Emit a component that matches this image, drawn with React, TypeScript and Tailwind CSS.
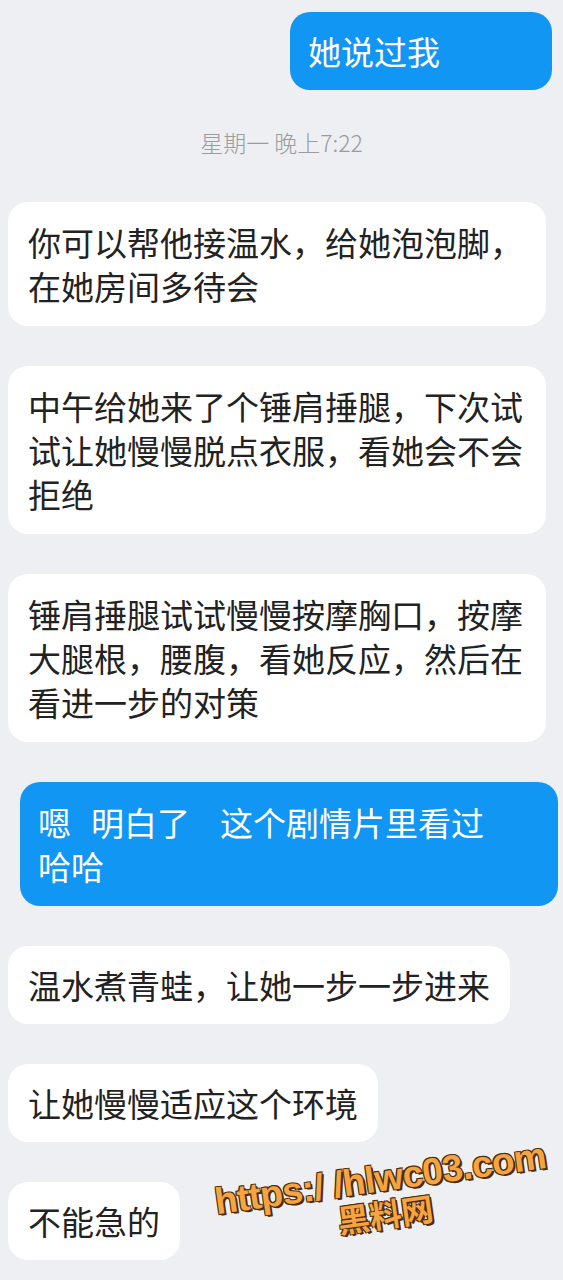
const messages: { id: number; from: "me" | "them"; text: string }[] = [
    { id: 1, from: "them", text: "你可以帮他接温水，给她泡泡脚，在她房间多待会" },
    { id: 2, from: "them", text: "中午给她来了个锤肩捶腿，下次试试让她慢慢脱点衣服，看她会不会拒绝" },
    { id: 3, from: "them", text: "锤肩捶腿试试慢慢按摩胸口，按摩大腿根，腰腹，看她反应，然后在看进一步的对策" },
];

const tail = ["温水煮青蛙，让她一步一步进来", "让她慢慢适应这个环境", "不能急的"];

function Bubble({ children, mine, className = "" }: { children: React.ReactNode; mine?: boolean; className?: string }) {
    return (
        <div
            className={`rounded-[20px] px-[20px] py-[18px] text-[33px] leading-[44px] ${mine ? "bg-[#1296f3] text-white" : "bg-white text-[#222222]"
                } ${className}`}
        >
            {children}
        </div>
    );
}

export default function App() {
    return (
        <div
            className="relative h-[1280px] w-[563px] overflow-hidden bg-[#eeeff3]"
            style={{ fontFamily: '"Noto Sans CJK SC", "Noto Sans", sans-serif' }}
        >
            <div className="flex flex-col pt-[12px]">
                {/* outgoing */}
                <Bubble mine className="mr-[11px] w-[262px] self-end !px-[18px] !py-[17px] bg-[#1a95ee]">
                    她说过我
                </Bubble>

                {/* timestamp */}
                <div className="mt-[38px] mb-[46px] text-center text-[23px] font-light leading-[28px] text-[#9b9b9d]">
                    星期一 晚上7:22
                </div>

                <div className="flex flex-col items-start gap-[40px] pl-[8px]">
                    {messages.map((m) => (
                        <Bubble key={m.id} className="w-[538px]">
                            {m.text}
                        </Bubble>
                    ))}

                    <Bubble mine className="ml-[12px] w-[538px] !pl-[18px] bg-[#0b9af8]">
                        嗯<span className="inline-block w-[20px]" />明白了<span className="inline-block w-[30px]" />这个剧情片里看过
                        <br />
                        哈哈
                    </Bubble>

                    {tail.map((t) => (
                        <Bubble key={t} className="!py-[17px]">{t}</Bubble>
                    ))}
                </div>
            </div>

            {/* watermark */}
            <div
                className="absolute left-[216px] top-[1160px] flex -rotate-[8deg] flex-col items-center text-[#f6a443] [text-shadow:2px_2px_0_#4b2d0a,-1px_-1px_0_#4b2d0a,1px_-1px_0_#4b2d0a,-1px_1px_0_#4b2d0a]"
                style={{ fontFamily: '"Liberation Sans", "Noto Sans CJK SC", sans-serif' }}
            >
                <span className="text-[37px] font-bold leading-[38px] tracking-[-0.5px]">https:/ /hlwc03.com</span>
                <span className="text-[32px] font-bold leading-[36px]">黑料网</span>
            </div>
        </div>
    );
}
